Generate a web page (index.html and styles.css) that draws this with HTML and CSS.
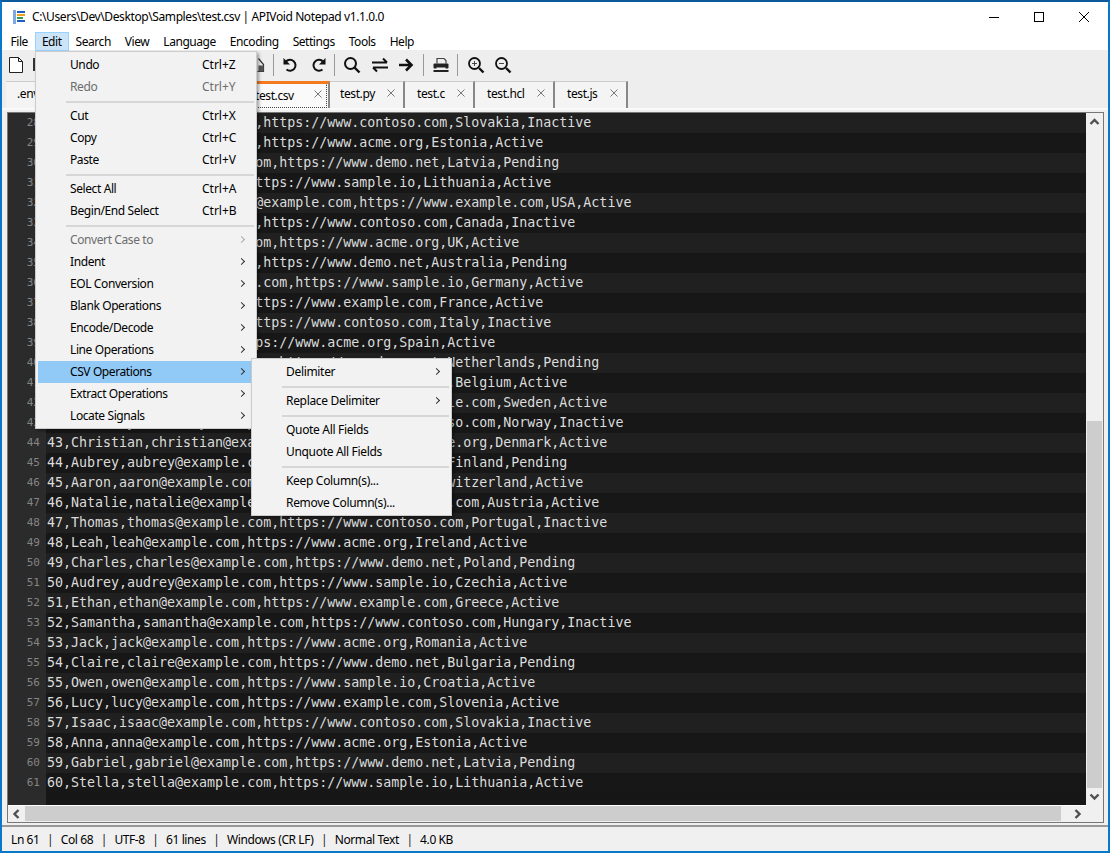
FILE: index.html
```html
<!DOCTYPE html>
<html lang="en">
<head>
<meta charset="utf-8">
<title>APIVoid Notepad</title>
<link rel="stylesheet" href="styles.css">
</head>
<body>
<div class="window">
  <header class="titlebar">
    <svg class="appicon" width="13" height="14" viewBox="0 0 13 14"><rect x="0" y="0" width="3" height="14" fill="#7fa8e0"/><rect x="3" y="0" width="10" height="14" fill="#fff"/><rect x="4" y="1" width="8" height="2" fill="#1f5fc4"/><rect x="4" y="4" width="8" height="2" fill="#f0a020"/><rect x="4" y="7" width="6" height="2" fill="#2e9e4a"/><rect x="4" y="10" width="8" height="2" fill="#1f5fc4"/></svg>
    <span class="title">C:\Users\Dev\Desktop\Samples\test.csv | APIVoid Notepad v1.1.0.0</span>
    <div class="winbtns">
      <svg width="12" height="12" viewBox="0 0 12 12"><path d="M1 6.500h10" stroke="#000" fill="none"/></svg>
      <svg width="12" height="12" viewBox="0 0 12 12"><rect x="1.500" y="1.500" width="9" height="9" stroke="#000" fill="none"/></svg>
      <svg width="12" height="12" viewBox="0 0 12 12"><path d="M1 1l10 10M11 1L1 11" stroke="#000" fill="none"/></svg>
    </div>
  </header>
  <nav class="menubar">
    <span class="mi">File</span><span class="mi mi-open">Edit</span><span class="mi">Search</span><span class="mi">View</span><span class="mi">Language</span><span class="mi">Encoding</span><span class="mi">Settings</span><span class="mi">Tools</span><span class="mi">Help</span>
  </nav>
  <div class="toolbar">
    <svg class="ti ti-new" width="16" height="18" viewBox="0 0 16 18"><path d="M1.500 1.500h9l4 4v11h-13zM10.500 1.500v4h4" fill="#fff" stroke="#222" stroke-width="1"/></svg>
    <span class="ti-stub"></span>
    <span class="spacer"></span>
    <svg class="ti ti-save" width="16" height="18" viewBox="0 0 16 18"><path d="M9.500 2.500l5 6v7h-6" fill="#eee" stroke="#333" stroke-width="1.200"/><path d="M9.500 9.500h5v6h-5z" fill="#555"/></svg>
    <span class="tsep tsep-0"></span>
    <svg class="ti ti-undo" width="18" height="18" viewBox="0 0 18 18"><path d="M5 5.500A5.500 5.500 0 1 1 5.500 13.500" fill="none" stroke="#111" stroke-width="2"/><path d="M2.500 2v6.500h6.500z" fill="#111"/></svg>
    <svg class="ti ti-redo" width="18" height="18" viewBox="0 0 18 18"><path d="M13 5.500A5.500 5.500 0 1 0 12.500 13.500" fill="none" stroke="#111" stroke-width="2"/><path d="M15.500 2v6.500H9z" fill="#111"/></svg>
    <span class="tsep tsep-a"></span>
    <svg class="ti ti-find" width="18" height="18" viewBox="0 0 18 18"><circle cx="7.500" cy="7.500" r="5.500" fill="none" stroke="#111" stroke-width="2"/><path d="M11.500 11.500l5 5" stroke="#111" stroke-width="2.400"/></svg>
    <svg class="ti ti-repl" width="18" height="18" viewBox="0 0 18 18"><path d="M1 6.500h15M12 2.500l4 4" fill="none" stroke="#111" stroke-width="2"/><path d="M17 11.500H2M6 15.500l-4-4" fill="none" stroke="#111" stroke-width="2"/></svg>
    <svg class="ti ti-go" width="18" height="18" viewBox="0 0 18 18"><path d="M2 9h12M9 3.500L14.500 9 9 14.500" fill="none" stroke="#111" stroke-width="2.600"/></svg>
    <span class="tsep tsep-b"></span>
    <svg class="ti ti-print" width="18" height="18" viewBox="0 0 18 18"><path d="M5 7.500V2.500h7l2 2v3" fill="none" stroke="#444" stroke-width="1.200"/><rect x="1.500" y="7.500" width="15" height="5" rx="1" fill="#222"/><rect x="4.500" y="11.500" width="9" height="3.500" fill="#eee"/><path d="M1.500 15h15" stroke="#222" stroke-width="2"/></svg>
    <span class="tsep tsep-c"></span>
    <svg class="ti ti-zi" width="18" height="18" viewBox="0 0 18 18"><circle cx="7.500" cy="7.500" r="5.500" fill="none" stroke="#111" stroke-width="1.800"/><path d="M12 12l4.500 4.500" stroke="#111" stroke-width="2.400"/><path d="M5 7.500h5M7.500 5v5" stroke="#444"/></svg>
    <svg class="ti ti-zo" width="18" height="18" viewBox="0 0 18 18"><circle cx="7.500" cy="7.500" r="5.500" fill="none" stroke="#111" stroke-width="1.800"/><path d="M12 12l4.500 4.500" stroke="#111" stroke-width="2.400"/><path d="M5 7.500h5" stroke="#444"/></svg>
  </div>
  <div class="tabs">
    <div class="tab tab-first"><span class="tabname">.env</span></div>
    <div class="tab tab-active"><span class="tabname">test.csv</span><svg class="x" width="8" height="8" viewBox="0 0 8 8"><path d="M.5 .5l7 7M7.500 .5l-7 7" stroke="#777" fill="none"/></svg></div>
    <div class="tab tab-py"><span class="tabname">test.py</span><svg class="x" width="8" height="8" viewBox="0 0 8 8"><path d="M.5 .5l7 7M7.500 .5l-7 7" stroke="#777" fill="none"/></svg></div>
    <div class="tab tab-c"><span class="tabname">test.c</span><svg class="x" width="8" height="8" viewBox="0 0 8 8"><path d="M.5 .5l7 7M7.500 .5l-7 7" stroke="#777" fill="none"/></svg></div>
    <div class="tab tab-hcl"><span class="tabname">test.hcl</span><svg class="x" width="8" height="8" viewBox="0 0 8 8"><path d="M.5 .5l7 7M7.500 .5l-7 7" stroke="#777" fill="none"/></svg></div>
    <div class="tab tab-js"><span class="tabname">test.js</span><svg class="x" width="8" height="8" viewBox="0 0 8 8"><path d="M.5 .5l7 7M7.500 .5l-7 7" stroke="#777" fill="none"/></svg></div>
  </div>
  <main class="frame">
    <div class="editorwrap">
      <div class="editor" id="ed">
        <div class="row"><span class="ln">28</span><span class="tx">27,Isaac,isaac@example.com,https://www.contoso.com,Slovakia,Inactive</span></div>
        <div class="row"><span class="ln">29</span><span class="tx">28,Peter,peter@example.com,https://www.acme.org,Estonia,Active</span></div>
        <div class="row"><span class="ln">30</span><span class="tx">29,Robert,robert@example.com,https://www.demo.net,Latvia,Pending</span></div>
        <div class="row"><span class="ln">31</span><span class="tx">30,Emma,emma@example.com,https://www.sample.io,Lithuania,Active</span></div>
        <div class="row"><span class="ln">32</span><span class="tx">31,Christopher,christopher@example.com,https://www.example.com,USA,Active</span></div>
        <div class="row"><span class="ln">33</span><span class="tx">32,James,james@example.com,https://www.contoso.com,Canada,Inactive</span></div>
        <div class="row"><span class="ln">34</span><span class="tx">33,Sophie,sophie@example.com,https://www.acme.org,UK,Active</span></div>
        <div class="row"><span class="ln">35</span><span class="tx">34,Laura,laura@example.com,https://www.demo.net,Australia,Pending</span></div>
        <div class="row"><span class="ln">36</span><span class="tx">35,Matthew,matthew@example.com,https://www.sample.io,Germany,Active</span></div>
        <div class="row"><span class="ln">37</span><span class="tx">36,Noah,noah@example.com,https://www.example.com,France,Active</span></div>
        <div class="row"><span class="ln">38</span><span class="tx">37,Mila,mila@example.com,https://www.contoso.com,Italy,Inactive</span></div>
        <div class="row"><span class="ln">39</span><span class="tx">38,Amy,amy@example.com,https://www.acme.org,Spain,Active</span></div>
        <div class="row"><span class="ln">40</span><span class="tx">39,Sophia,sophia@example.com,https://www.demo.net,Netherlands,Pending</span></div>
        <div class="row"><span class="ln">41</span><span class="tx">40,Pamela,pamela@example.com,https://www.sample.io,Belgium,Active</span></div>
        <div class="row"><span class="ln">42</span><span class="tx">41,Jonathan,jonathan@example.com,https://www.example.com,Sweden,Active</span></div>
        <div class="row"><span class="ln">43</span><span class="tx">42,Kimberly,kimberly@example.com,https://www.contoso.com,Norway,Inactive</span></div>
        <div class="row"><span class="ln">44</span><span class="tx">43,Christian,christian@example.com,https://www.acme.org,Denmark,Active</span></div>
        <div class="row"><span class="ln">45</span><span class="tx">44,Aubrey,aubrey@example.com,https://www.demo.net,Finland,Pending</span></div>
        <div class="row"><span class="ln">46</span><span class="tx">45,Aaron,aaron@example.com,https://www.sample.io,Switzerland,Active</span></div>
        <div class="row"><span class="ln">47</span><span class="tx">46,Natalie,natalie@example.com,https://www.example.com,Austria,Active</span></div>
        <div class="row"><span class="ln">48</span><span class="tx">47,Thomas,thomas@example.com,https://www.contoso.com,Portugal,Inactive</span></div>
        <div class="row"><span class="ln">49</span><span class="tx">48,Leah,leah@example.com,https://www.acme.org,Ireland,Active</span></div>
        <div class="row"><span class="ln">50</span><span class="tx">49,Charles,charles@example.com,https://www.demo.net,Poland,Pending</span></div>
        <div class="row"><span class="ln">51</span><span class="tx">50,Audrey,audrey@example.com,https://www.sample.io,Czechia,Active</span></div>
        <div class="row"><span class="ln">52</span><span class="tx">51,Ethan,ethan@example.com,https://www.example.com,Greece,Active</span></div>
        <div class="row"><span class="ln">53</span><span class="tx">52,Samantha,samantha@example.com,https://www.contoso.com,Hungary,Inactive</span></div>
        <div class="row"><span class="ln">54</span><span class="tx">53,Jack,jack@example.com,https://www.acme.org,Romania,Active</span></div>
        <div class="row"><span class="ln">55</span><span class="tx">54,Claire,claire@example.com,https://www.demo.net,Bulgaria,Pending</span></div>
        <div class="row"><span class="ln">56</span><span class="tx">55,Owen,owen@example.com,https://www.sample.io,Croatia,Active</span></div>
        <div class="row"><span class="ln">57</span><span class="tx">56,Lucy,lucy@example.com,https://www.example.com,Slovenia,Active</span></div>
        <div class="row"><span class="ln">58</span><span class="tx">57,Isaac,isaac@example.com,https://www.contoso.com,Slovakia,Inactive</span></div>
        <div class="row"><span class="ln">59</span><span class="tx">58,Anna,anna@example.com,https://www.acme.org,Estonia,Active</span></div>
        <div class="row"><span class="ln">60</span><span class="tx">59,Gabriel,gabriel@example.com,https://www.demo.net,Latvia,Pending</span></div>
        <div class="row"><span class="ln">61</span><span class="tx">60,Stella,stella@example.com,https://www.sample.io,Lithuania,Active</span></div>
        <div class="rest"><span class="ln"></span></div>
      </div>
      <div class="vscroll">
        <svg class="sbtn" width="17" height="17" viewBox="0 0 17 17"><path d="M4.500 11L8.500 7l4 4" fill="none" stroke="#505050" stroke-width="2.400"/></svg>
        <div class="vtrack"><div class="vthumb"></div></div>
        <svg class="sbtn" width="17" height="17" viewBox="0 0 17 17"><path d="M4.500 6.500l4 4 4-4" fill="none" stroke="#505050" stroke-width="2.400"/></svg>
      </div>
      <div class="hscroll">
        <svg class="sbtn" width="17" height="16" viewBox="0 0 17 16"><path d="M10.500 4l-4 4 4 4" fill="none" stroke="#505050" stroke-width="2.400"/></svg>
        <div class="htrack"><div class="hthumb"></div></div>
        <svg class="sbtn" width="17" height="16" viewBox="0 0 17 16"><path d="M6.500 4l4 4-4 4" fill="none" stroke="#505050" stroke-width="2.400"/></svg>
      </div>
      <div class="corner"></div>
    </div>
  </main>
  <footer class="status">
    <span>Ln 61</span><span class="bar">|</span><span>Col 68</span><span class="bar">|</span><span>UTF-8</span><span class="bar">|</span><span>61 lines</span><span class="bar">|</span><span>Windows (CR LF)</span><span class="bar">|</span><span>Normal Text</span><span class="bar">|</span><span>4.0 KB</span>
  </footer>

  <div class="menu menu-edit">
    <div class="item"><span>Undo</span><span class="sc">Ctrl+Z</span></div>
    <div class="item off"><span>Redo</span><span class="sc">Ctrl+Y</span></div>
    <div class="sep"></div>
    <div class="item"><span>Cut</span><span class="sc">Ctrl+X</span></div>
    <div class="item"><span>Copy</span><span class="sc">Ctrl+C</span></div>
    <div class="item"><span>Paste</span><span class="sc">Ctrl+V</span></div>
    <div class="sep"></div>
    <div class="item"><span>Select All</span><span class="sc">Ctrl+A</span></div>
    <div class="item"><span>Begin/End Select</span><span class="sc">Ctrl+B</span></div>
    <div class="sep"></div>
    <div class="item off sub"><span>Convert Case to</span><i class="ar"></i></div>
    <div class="item sub"><span>Indent</span><i class="ar"></i></div>
    <div class="item sub"><span>EOL Conversion</span><i class="ar"></i></div>
    <div class="item sub"><span>Blank Operations</span><i class="ar"></i></div>
    <div class="item sub"><span>Encode/Decode</span><i class="ar"></i></div>
    <div class="item sub"><span>Line Operations</span><i class="ar"></i></div>
    <div class="item sub hot"><span>CSV Operations</span><i class="ar"></i></div>
    <div class="item sub"><span>Extract Operations</span><i class="ar"></i></div>
    <div class="item sub"><span>Locate Signals</span><i class="ar"></i></div>
  </div>
  <div class="menu menu-csv">
    <div class="item sub"><span>Delimiter</span><i class="ar"></i></div>
    <div class="sep"></div>
    <div class="item sub"><span>Replace Delimiter</span><i class="ar"></i></div>
    <div class="sep"></div>
    <div class="item"><span>Quote All Fields</span></div>
    <div class="item"><span>Unquote All Fields</span></div>
    <div class="sep"></div>
    <div class="item"><span>Keep Column(s)...</span></div>
    <div class="item"><span>Remove Column(s)...</span></div>
  </div>
</div>
</body>
</html>
```
FILE: styles.css
```css
* { box-sizing: border-box; }
html, body { margin: 0; padding: 0; height: 100%; overflow: hidden; }
body { font-family: "Noto Sans", "Open Sans", sans-serif; font-size: 12px; color: #000; background: #0078d7; letter-spacing: -0.4px; }

.window {
  position: relative;
  width: 1110px; height: 853px;
  display: flex; flex-direction: column;
  background: #f0f0f0;
  border: 2px solid #0a78c8;
  border-top-color: #0a5a9c;
}

.titlebar { height: 31px; flex: none; background: #fff; display: flex; align-items: center; padding: 0 0 2px 11px; }
.appicon { flex: none; }
.title { margin-left: 6px; white-space: nowrap; }
.winbtns { margin-left: auto; display: flex; gap: 33px; padding: 0 18px 0 0; }

.menubar { height: 17px; flex: none; background: #fff; display: flex; padding-left: 1.500px; position: relative; letter-spacing: -0.45px; }
.mi { padding: 0 6px; margin-top: -1px; line-height: 17px; height: 19px; border: 1px solid transparent; }
.mi-open { background: #cce4f7; border-color: #99d1ff; }

.toolbar { height: 30px; flex: none; background: #eee; display: flex; align-items: center; padding-left: 6px; }
.ti { flex: none; }
.ti-stub { width: 3px; height: 13px; background: #333; margin-left: 9px; margin-top: -2px; flex: none; }
.spacer { width: 213px; flex: none; }
.tsep { width: 1px; height: 22px; background: #999; flex: none; }
.tsep-0 { margin: 0 7px 0 8px; }
.ti-redo { margin-left: 11px; }
.tsep-a { margin: 0 8px 0 6px; }
.ti-repl { margin-left: 10px; }
.ti-go { margin-left: 8px; }
.tsep-b { margin: 0 8px 0 8px; }
.tsep-c { margin: 0 9px 0 7px; }
.ti-zo { margin-left: 9px; }

.tabs { height: 28px; flex: none; background: #eee; display: flex; padding-left: 4px; align-items: flex-end; }
.tab { height: 27px; background: #f4f4f4; display: flex; align-items: center; border-right: 2px solid #888; border-top: 1px solid #ccc; padding: 0 0 3px 12px; position: relative; }
.tabname { white-space: nowrap; }
.x { position: absolute; right: 8px; top: 7px; }
.tab-first { width: 239px; padding-left: 11px; }
.tab-active { width: 85px; background: #fafafa; border-top: 3px solid #f47a20; padding: 0 0 1px 10px; }
.tab-active::after { content: ""; position: absolute; inset: 0 1px 0 0; border: 1px dotted #444; border-top-color: transparent; }
.tab-active .x { right: 6px; top: 6px; }
.tab-py { width: 75px; padding-left: 10px; }
.tab-c { width: 70px; }
.tab-hcl { width: 80px; }
.tab-js { width: 73px; }

.frame { flex: none; height: 719px; background: #f0f0f0; border-top: 2px solid #fafafa; border-bottom: 2px solid #999; padding: 2px 4px 2px 5px; display: flex; }
.editorwrap { flex: 1; display: grid; grid-template-columns: 1fr 17px; grid-template-rows: 1fr 17px; border: 1px solid #777; background: #fff; min-height: 0; min-width: 0; }
.editor { background: #161616; overflow: hidden; font-family: "DejaVu Sans Mono", monospace; font-size: 13.300px; line-height: 20px; letter-spacing: 0; color: #dcdcdc; display: flex; flex-direction: column; min-height: 0; }
.row { display: flex; height: 20px; flex: none; background: #171717; }
.row:nth-child(odd) { background: #202020; }
.ln { width: 38px; flex: none; background: #2b2b2b; color: #858585; text-align: right; padding-right: 6px; font-size: 11px; }
.tx { padding-left: 1px; white-space: pre; }
.rest { flex: 1; display: flex; }

.vscroll { background: #f0f0f0; display: flex; flex-direction: column; grid-row: 1; grid-column: 2; min-height: 0; }
.sbtn { flex: none; display: block; }
.vtrack { flex: 1; padding: 291px 1px 0; min-height: 0; }
.vthumb { height: 100%; background: #cdcdcd; }
.hscroll { background: #f0f0f0; display: flex; grid-row: 2; grid-column: 1; border-top: 1px solid #fff; min-width: 0; }
.htrack { flex: 1; }
.hthumb { height: 15px; width: 1036px; background: #cdcdcd; }
.corner { background: #f0f0f0; }

.status { flex: 1; background: #f0f0f0; display: flex; align-items: center; padding-left: 9px; white-space: nowrap; }
.bar { margin: 0 7.500px; color: #222; }

.menu { position: absolute; background: #f2f2f2; border: 1px solid #ccc; box-shadow: 2px 2px 3px rgba(0,0,0,.35); padding: 2px; }
.menu-edit { left: 33px; top: 49px; width: 222px; height: 378px; }
.menu-csv { left: 249px; top: 356px; width: 201px; height: 158px; }
.item { height: 22px; display: flex; align-items: center; padding: 0 0 1px 32px; position: relative; white-space: nowrap; }
.off { color: #6d6d6d; }
.hot { background: #91c9f7; margin-right: 2px; }
.sc { position: absolute; left: 164px; letter-spacing: 0; }
.menu-csv .item { letter-spacing: -0.32px; }
.sep { height: 2px; background: #d6d6d6; margin: 3px 0 2px 28px; }
.ar { position: absolute; right: 10px; top: 8px; width: 5px; height: 5px; border-top: 1px solid #333; border-right: 1px solid #333; transform: rotate(45deg); }
.off .ar { border-color: #aaa; }
.hot .ar { right: 8px; }
```
